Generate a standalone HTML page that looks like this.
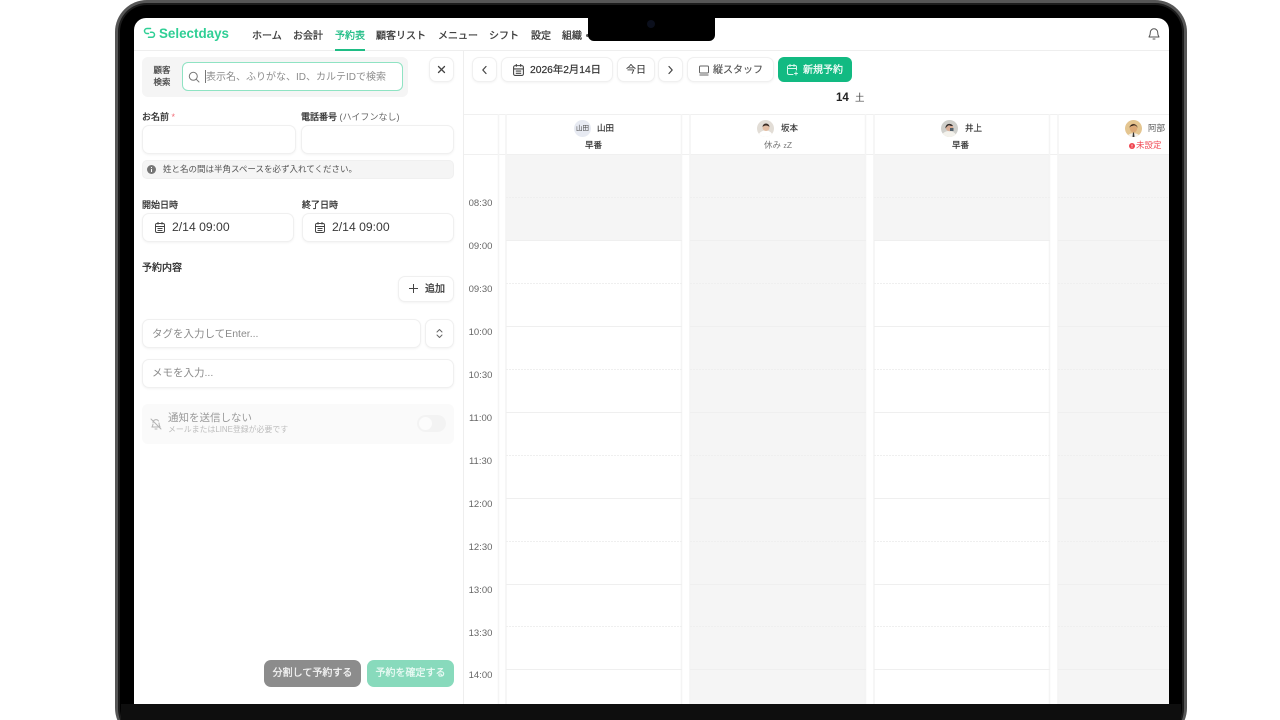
<!DOCTYPE html>
<html lang="ja">
<head>
<meta charset="utf-8">
<title>Selectdays</title>
<style>
*{box-sizing:border-box;margin:0;padding:0}
html,body{width:1280px;height:720px;overflow:hidden;background:#fff}
body{font-family:"Liberation Sans","Noto Sans CJK JP",sans-serif;color:#333;position:relative}
.a{position:absolute;white-space:nowrap}
.frame{position:absolute;left:115px;top:0;width:1072px;height:740px;border-radius:32px;background:#000;border:3px solid #565656;border-bottom:0;box-shadow:inset 0 0 0 2px #1c1c1c}
.screen{position:absolute;left:134px;top:18px;width:1035px;height:686px;background:#fff;border-radius:12px 12px 0 0;overflow:hidden}
.chin{position:absolute;left:121px;top:704px;width:1060px;height:16px;background:#0e0e0e}
.notch{position:absolute;left:588px;top:18px;width:127px;height:23px;background:#000;border-radius:0 0 6px 6px}
.cam{position:absolute;left:647px;top:20px;width:8px;height:8px;border-radius:50%;background:#0b0f1c}
.nav{font-size:10px;font-weight:400;-webkit-text-stroke:.3px #3d3d3d;color:#3d3d3d;top:30px;line-height:14px}
.box{position:absolute;background:#fff;border:1px solid #f0f0f0;border-radius:7px;box-shadow:0 1px 2px rgba(0,0,0,.05)}
.lab{font-size:9px;font-weight:400;-webkit-text-stroke:.3px #333;color:#333;line-height:12px}
.ph{font-size:10.5px;color:#8b8b8b;line-height:14px}
.btn{font-size:10px;-webkit-text-stroke:.3px #333;color:#333;line-height:14px}
.t{font-size:9.5px;color:#666;left:468px;width:25px;text-align:center;line-height:12px}
.gray{position:absolute;background:#f5f5f5}
.hl{position:absolute;height:1px;background:#eeeeee}
.av{position:absolute;width:17px;height:17px;border-radius:50%;overflow:hidden}
</style>
</head>
<body>
<div class="frame"></div>
<div class="screen"></div>
<div class="chin"></div>

<!-- calendar background -->
<div class="gray" style="left:506px;top:154px;width:175px;height:86px"></div>
<div class="gray" style="left:690px;top:154px;width:175px;height:550px"></div>
<div class="gray" style="left:874px;top:154px;width:175px;height:86px"></div>
<div class="gray" style="left:1058px;top:154px;width:111px;height:550px"></div>

<svg class="a" style="left:464px;top:114px" width="705" height="590">
  <g fill="none" stroke="#f0f0f0" stroke-width="1">
    <path d="M0 .5H705M0 40.500H705"/>
    <path d="M34.500 0V590M42 0V590M217.500 0V590M226 0V590M401.500 0V590M410 0V590M585.500 0V590M594 0V590" stroke="#f4f4f4" stroke-width="1.500"/>
  </g>
  <g stroke="#efefef" stroke-width="1">
    <path d="M42 126.500H218M226 126.500H402M410 126.500H586M594 126.500H705"/>
    <path d="M42 212.500H218M226 212.500H402M410 212.500H586M594 212.500H705"/>
    <path d="M42 298.500H218M226 298.500H402M410 298.500H586M594 298.500H705"/>
    <path d="M42 384.500H218M226 384.500H402M410 384.500H586M594 384.500H705"/>
    <path d="M42 470.500H218M226 470.500H402M410 470.500H586M594 470.500H705"/>
    <path d="M42 555.500H218M226 555.500H402M410 555.500H586M594 555.500H705"/>
  </g>
  <g stroke="#efefef" stroke-width="1" stroke-dasharray="2 1">
    <path d="M42 83.500H218M226 83.500H402M410 83.500H586M594 83.500H705"/>
    <path d="M42 169.500H218M226 169.500H402M410 169.500H586M594 169.500H705"/>
    <path d="M42 255.500H218M226 255.500H402M410 255.500H586M594 255.500H705"/>
    <path d="M42 341.500H218M226 341.500H402M410 341.500H586M594 341.500H705"/>
    <path d="M42 427.500H218M226 427.500H402M410 427.500H586M594 427.500H705"/>
    <path d="M42 512.500H218M226 512.500H402M410 512.500H586M594 512.500H705"/>
  </g>
</svg>

<!-- nav -->
<div class="hl" style="left:134px;top:50px;width:1035px"></div>
<svg class="a" style="left:143px;top:27px" width="13" height="12" viewBox="0 0 13 12" fill="none" stroke="#2fcf95" stroke-width="1.500" stroke-linecap="round"><path d="M7.500 1.500H4a2.500 2.500 0 0 0 0 5H5.500"/><path d="M5.500 10.300H9a2.500 2.500 0 0 0 0-5H7.500"/></svg>
<div class="a" style="left:159px;top:26px;font-size:13.400px;font-weight:700;color:#2fcf95;line-height:16px">Selectdays</div>
<div class="a nav" style="left:252px">ホーム</div>
<div class="a nav" style="left:293px">お会計</div>
<div class="a nav" style="left:335px;color:#1fbd85;-webkit-text-stroke-color:#1fbd85">予約表</div>
<div class="a" style="left:335px;top:49px;width:30px;height:2px;background:#1fbd85"></div>
<div class="a nav" style="left:376px">顧客リスト</div>
<div class="a nav" style="left:438px">メニュー</div>
<div class="a nav" style="left:489px">シフト</div>
<div class="a nav" style="left:531px">設定</div>
<div class="a nav" style="left:562px">組織</div>
<div class="a" style="left:586px;top:34px;width:3px;height:3px;background:#555;border-radius:50%"></div>
<div class="notch"></div><div class="cam"></div>
<svg class="a" style="left:1147px;top:27px" width="14" height="14" viewBox="0 0 14 14" fill="none" stroke="#555" stroke-width="1" stroke-linecap="round" stroke-linejoin="round"><path d="M3.300 5.500a3.700 3.700 0 0 1 7.400 0c0 3 1.200 4 1.300 4.500H2c.1-.5 1.300-1.500 1.300-4.500z"/><path d="M6 12h2"/></svg>

<!-- left panel -->
<div class="a" style="left:463px;top:51px;width:1px;height:653px;background:#eee"></div>
<div class="a" style="left:142px;top:57px;width:266px;height:40px;background:#f5f5f5;border-radius:6px"></div>
<div class="a lab" style="left:152px;top:65px;width:20px;white-space:normal;text-align:center;line-height:11.500px;font-size:8.500px;color:#444;-webkit-text-stroke:.2px #444">顧客検索</div>
<div class="a" style="left:182px;top:62px;width:221px;height:29px;background:#fff;border:1px solid #8fe3c3;border-radius:6px"></div>
<svg class="a" style="left:188px;top:71px" width="12" height="12" viewBox="0 0 12 12" fill="none" stroke="#777" stroke-width="1" stroke-linecap="round"><circle cx="5.300" cy="5.300" r="4"/><path d="M8.300 8.300L11 11"/></svg>
<div class="a" style="left:205px;top:70px;width:1px;height:13px;background:#777"></div>
<div class="a ph" style="left:206px;top:72px;font-size:10px;line-height:12px;color:#8c8c8c">表示名、ふりがな、ID、カルテIDで検索</div>
<div class="box" style="left:429px;top:57px;width:25px;height:25px"></div>
<svg class="a" style="left:437px;top:65px" width="9" height="9" viewBox="0 0 9 9" stroke="#444" stroke-width="1.300" stroke-linecap="round"><path d="M1.500 1.500l6 6M7.500 1.500l-6 6"/></svg>

<div class="a lab" style="left:142px;top:111px">お名前 <span style="color:#f26d78;-webkit-text-stroke:0">*</span></div>
<div class="a lab" style="left:301px;top:111px">電話番号 <span style="-webkit-text-stroke:0;color:#666">(ハイフンなし)</span></div>
<div class="box" style="left:142px;top:125px;width:154px;height:29px"></div>
<div class="box" style="left:301px;top:125px;width:153px;height:29px"></div>
<div class="a" style="left:142px;top:160px;width:312px;height:19px;background:#f5f5f5;border:1px solid #f0f0f0;border-radius:5px"></div>
<svg class="a" style="left:147px;top:165px" width="9" height="9" viewBox="0 0 9 9"><circle cx="4.500" cy="4.500" r="4.500" fill="#777"/><path d="M4.500 4v3M4.500 2v1" stroke="#fff" stroke-width="1"/></svg>
<div class="a" style="left:163px;top:163px;font-size:8.500px;color:#555;line-height:12px">姓と名の間は半角スペースを必ず入れてください。</div>

<div class="a lab" style="left:142px;top:199px">開始日時</div>
<div class="a lab" style="left:302px;top:199px">終了日時</div>
<div class="box" style="left:142px;top:213px;width:152px;height:29px"></div>
<div class="box" style="left:302px;top:213px;width:152px;height:29px"></div>
<svg class="a" style="left:155px;top:222px" width="10" height="11" viewBox="0 0 10 11" fill="none" stroke="#444" stroke-width="1"><rect x=".5" y="1.500" width="9" height="9" rx="1.500"/><path d="M.5 4.500h9M3 0v2.500M7 0v2.500M2.500 6.500h5M2.500 8.500h5"/></svg>
<svg class="a" style="left:315px;top:222px" width="10" height="11" viewBox="0 0 10 11" fill="none" stroke="#444" stroke-width="1"><rect x=".5" y="1.500" width="9" height="9" rx="1.500"/><path d="M.5 4.500h9M3 0v2.500M7 0v2.500M2.500 6.500h5M2.500 8.500h5"/></svg>
<div class="a" style="left:172px;top:220px;font-size:12.200px;color:#3a3a3a;line-height:15px">2/14 09:00</div>
<div class="a" style="left:332px;top:220px;font-size:12.200px;color:#3a3a3a;line-height:15px">2/14 09:00</div>

<div class="a" style="left:142px;top:262px;font-size:10px;-webkit-text-stroke:.35px #333;color:#333;line-height:14px">予約内容</div>
<div class="box" style="left:398px;top:276px;width:56px;height:26px"></div>
<svg class="a" style="left:409px;top:284px" width="9" height="9" viewBox="0 0 9 9" stroke="#444" stroke-width="1"><path d="M4.500 0v9M0 4.500h9"/></svg>
<div class="a btn" style="left:425px;top:283px;color:#444">追加</div>

<div class="box" style="left:142px;top:319px;width:279px;height:29px"></div>
<div class="a ph" style="left:152px;top:327px;font-size:10.500px">タグを入力してEnter...</div>
<div class="box" style="left:425px;top:319px;width:29px;height:29px"></div>
<svg class="a" style="left:436px;top:328px" width="7" height="11" viewBox="0 0 7 11" fill="none" stroke="#666" stroke-width="1" stroke-linecap="round" stroke-linejoin="round"><path d="M1 4l2.500-2.500L6 4M1 7l2.500 2.500L6 7"/></svg>
<div class="box" style="left:142px;top:359px;width:312px;height:29px"></div>
<div class="a ph" style="left:152px;top:366px;font-size:10.500px">メモを入力...</div>

<div class="a" style="left:142px;top:404px;width:312px;height:40px;background:#fafafa;border-radius:6px"></div>
<svg class="a" style="left:150px;top:418px" width="12" height="12" viewBox="0 0 12 12" fill="none" stroke="#b3b3b3" stroke-width="1" stroke-linecap="round"><path d="M3 4.500a3 3 0 0 1 5.500-1.500M9 5c0 2.500 1 3.500 1 4H2c.1-.5 1-1.500 1-3"/><path d="M5 11h2M1 1l10 10"/></svg>
<div class="a" style="left:168px;top:411px;font-size:10.500px;color:#9a9a9a;line-height:14px">通知を送信しない</div>
<div class="a" style="left:168px;top:424px;font-size:7.900px;color:#bdbdbd;line-height:12px">メールまたはLINE登録が必要です</div>
<div class="a" style="left:417px;top:415px;width:29px;height:17px;background:#f3f3f3;border-radius:9px"></div>
<div class="a" style="left:419px;top:417px;width:13px;height:13px;background:#fcfcfc;border-radius:50%"></div>

<div class="a" style="left:264px;top:660px;width:97px;height:27px;background:#8c8c8c;border-radius:7px;color:#f2f2f2;font-size:10px;-webkit-text-stroke:.3px #f2f2f2;text-align:center;line-height:28px">分割して予約する</div>
<div class="a" style="left:367px;top:660px;width:87px;height:27px;background:#88dabc;border-radius:7px;color:#eafaf4;font-size:10px;-webkit-text-stroke:.3px #eafaf4;text-align:center;line-height:28px">予約を確定する</div>

<!-- toolbar -->
<div class="box" style="left:472px;top:57px;width:25px;height:25px"></div>
<svg class="a" style="left:481px;top:65px" width="7" height="10" viewBox="0 0 7 10" fill="none" stroke="#444" stroke-width="1.200" stroke-linecap="round" stroke-linejoin="round"><path d="M5 1.500L1.800 5 5 8.500"/></svg>
<div class="box" style="left:501px;top:57px;width:112px;height:25px"></div>
<svg class="a" style="left:513px;top:64px" width="11" height="12" viewBox="0 0 10 11" fill="none" stroke="#444" stroke-width="1"><rect x=".5" y="1.500" width="9" height="9" rx="1.500"/><path d="M.5 4.500h9M3 0v2.500M7 0v2.500M2.500 6.500h5M2.500 8.500h5"/></svg>
<div class="a" style="left:530px;top:64px;font-size:10.300px;-webkit-text-stroke:.2px #333;color:#333;line-height:14px">2026年2月14日</div>
<div class="box" style="left:617px;top:57px;width:38px;height:25px"></div>
<div class="a btn" style="left:626px;top:64px;color:#333;-webkit-text-stroke:.1px #333">今日</div>
<div class="box" style="left:658px;top:57px;width:25px;height:25px"></div>
<svg class="a" style="left:667px;top:65px" width="7" height="10" viewBox="0 0 7 10" fill="none" stroke="#444" stroke-width="1.200" stroke-linecap="round" stroke-linejoin="round"><path d="M2 1.500L5.200 5 2 8.500"/></svg>
<div class="box" style="left:687px;top:57px;width:87px;height:25px"></div>
<svg class="a" style="left:699px;top:65px" width="10" height="11" viewBox="0 0 10 11" fill="none" stroke="#666" stroke-width="1"><rect x=".5" y="1" width="9" height="7" rx="1"/><path d="M.5 10h9"/></svg>
<div class="a" style="left:713px;top:64px;font-size:10px;color:#555;-webkit-text-stroke:.15px #555;line-height:14px">縦スタッフ</div>
<div class="a" style="left:778px;top:57px;width:74px;height:25px;background:#12ba82;border-radius:6px"></div>
<svg class="a" style="left:787px;top:64px" width="11" height="12" viewBox="0 0 11 12" fill="none" stroke="#d9f7ec" stroke-width="1" stroke-linecap="round"><path d="M6 10.500H2a1.500 1.500 0 0 1-1.500-1.500V3A1.500 1.500 0 0 1 2 1.500h6A1.500 1.500 0 0 1 9.500 3v3M.5 4.500h9M3 0v2.500M7 0v2.500M9 8v3M7.500 9.500h3"/></svg>
<div class="a" style="left:803px;top:64px;font-size:10px;-webkit-text-stroke:.3px #f0fbf7;color:#f0fbf7;line-height:14px">新規予約</div>
<div class="a" style="left:836px;top:91px;font-size:11.500px;font-weight:700;color:#222;line-height:15px">14</div>
<div class="a" style="left:855px;top:92px;font-size:9.500px;color:#444;line-height:14px">土</div>

<!-- staff header -->
<div class="av" style="left:574px;top:120px;background:#e7eaf2;font-size:6.500px;color:#444;line-height:17px;text-align:center">山田</div>
<div class="a" style="left:597px;top:122px;font-size:8.500px;-webkit-text-stroke:.15px #333;color:#333;line-height:13px">山田</div>
<div class="a" style="left:585px;top:139px;font-size:8.500px;-webkit-text-stroke:.15px #333;color:#333;line-height:13px">早番</div>

<svg class="av" style="left:757px;top:120px" viewBox="0 0 17 17"><rect width="17" height="17" fill="#e2ddd6"/><ellipse cx="8.500" cy="16" rx="7" ry="5.500" fill="#fff"/><circle cx="9" cy="7.500" r="3.500" fill="#e3bda3"/><path d="M5.500 7a3.500 3.500 0 0 1 7 0c-2-2-5-2-7 0z" fill="#3b2d26"/></svg>
<div class="a" style="left:781px;top:122px;font-size:8.500px;-webkit-text-stroke:.15px #333;color:#333;line-height:13px">坂本</div>
<div class="a" style="left:764px;top:139px;font-size:8.500px;color:#777;line-height:13px">休み <span style="font-size:7px">z</span>Z</div>

<svg class="av" style="left:941px;top:120px" viewBox="0 0 17 17"><rect width="17" height="17" fill="#cfcfcb"/><ellipse cx="8" cy="16" rx="7" ry="5" fill="#f4f2ec"/><circle cx="8.500" cy="7.500" r="3.800" fill="#d9ae97"/><path d="M4.500 8.500a4 4 0 0 1 7.500-2.500c-2 0-3 0-4-1-1 1-2 1-3.500 3.500z" fill="#33302f"/><rect x="9" y="8" width="3.500" height="3" fill="#52606b"/></svg>
<div class="a" style="left:965px;top:122px;font-size:8.500px;-webkit-text-stroke:.15px #333;color:#333;line-height:13px">井上</div>
<div class="a" style="left:952px;top:139px;font-size:8.500px;-webkit-text-stroke:.15px #333;color:#333;line-height:13px">早番</div>

<svg class="av" style="left:1125px;top:120px" viewBox="0 0 17 17"><rect width="17" height="17" fill="#e4c590"/><path d="M2 17c1-5 12-5 13 0z" fill="#f4f0e8"/><path d="M8 12.500h1l.5 4.500h-2z" fill="#333"/><ellipse cx="8.500" cy="8" rx="3.800" ry="4.500" fill="#dca876"/><path d="M4.300 8a4.300 5 0 0 1 8.400 0c-.8-2-2.500-3-4.200-2.500C7 6 5 6 4.300 8z" fill="#2a2018"/></svg>
<div class="a" style="left:1148px;top:122px;font-size:8.500px;color:#555;line-height:13px">阿部</div>
<svg class="a" style="left:1129px;top:143px" width="6" height="6" viewBox="0 0 6 6"><circle cx="3" cy="3" r="3" fill="#f0444f"/><path d="M3 1.500v2M3 4.200v.6" stroke="#fff" stroke-width=".8"/></svg>
<div class="a" style="left:1136px;top:139px;font-size:8.500px;color:#f0444f;line-height:13px">未設定</div>

<!-- times -->
<div class="a t" style="top:198px">08:30</div>
<div class="a t" style="top:241px">09:00</div>
<div class="a t" style="top:284px">09:30</div>
<div class="a t" style="top:327px">10:00</div>
<div class="a t" style="top:370px">10:30</div>
<div class="a t" style="top:413px">11:00</div>
<div class="a t" style="top:456px">11:30</div>
<div class="a t" style="top:499px">12:00</div>
<div class="a t" style="top:542px">12:30</div>
<div class="a t" style="top:585px">13:00</div>
<div class="a t" style="top:628px">13:30</div>
<div class="a t" style="top:670px">14:00</div>
</body>
</html>
